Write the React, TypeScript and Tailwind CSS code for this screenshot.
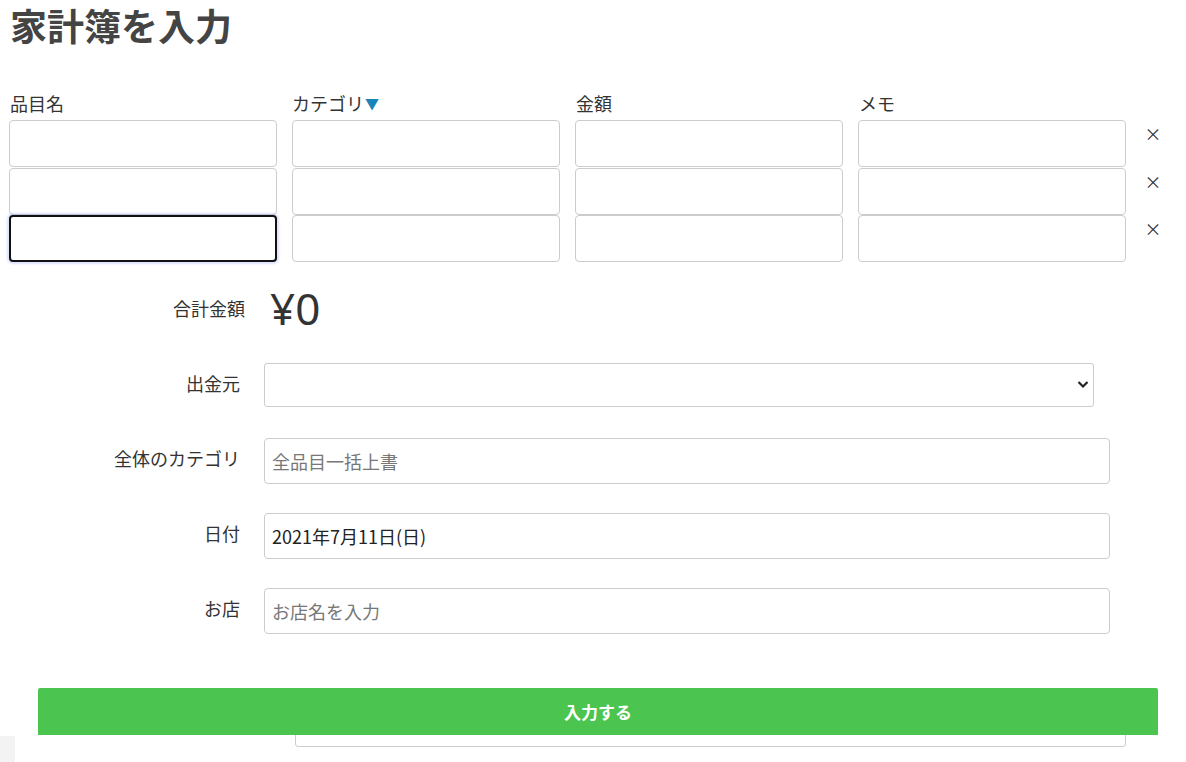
import React from "react";

const JP = "font-['Noto_Sans_CJK_JP','Noto_Sans',sans-serif]";

function Cell({ focused }: { focused?: boolean }) {
  return focused ? (
    <input
      className="h-full w-[268px] rounded-[4px] border-2 border-[#111] bg-white px-2 outline-none shadow-[0_0_2px_2px_rgba(120,140,255,0.25)]"
      readOnly
    />
  ) : (
    <input
      className="h-full w-[268px] rounded-[4px] border border-[#cccccc] bg-white px-2 outline-none"
      readOnly
    />
  );
}

function Row({ focusFirst }: { focusFirst?: boolean }) {
  return (
    <div className="flex h-[47.5px] pb-[0.5px]">
      <div className="grid grid-cols-[268px_268px_268px_268px] gap-x-[15px]">
        <Cell focused={focusFirst} />
        <Cell />
        <Cell />
        <Cell />
      </div>
      <div className="ml-[16px] w-[22px] pt-[1px] text-center text-[17px] leading-[26px] text-[#333]">×</div>
    </div>
  );
}

export default function App() {
  return (
    <div className={`relative h-[762px] w-[1186px] overflow-hidden bg-white text-[#333] ${JP}`}>
      <div className="px-[9px]">
        <h1 className="pl-[1px] text-[37px] font-bold leading-[50px] text-[#444]">家計簿を入力</h1>
        <div className="mt-[40px] grid h-[26px] grid-cols-[268px_268px_268px_268px] gap-x-[15px] text-[18px] leading-[26px]">
          <div className="pl-[1px]">品目名</div>
          <div className="flex items-center">
            カテゴリ<span className="ml-[1px] text-[14px] text-[#1a84b8]">▼</span>
          </div>
          <div className="pl-[1px]">金額</div>
          <div className="pl-[1px]">メモ</div>
        </div>
        <div className="mt-[4px] flex flex-col">
          <Row />
          <Row />
          <Row focusFirst />
        </div>
      </div>

      <div className="mt-[15px] flex h-[60px] items-center">
        <div className="w-[245px] text-right text-[18px] leading-[26px]">合計金額</div>
        <div className="ml-[25px] font-['Noto_Sans',sans-serif] text-[44px] leading-[60px] text-[#333]">¥0</div>
      </div>

      <div className="mt-[25px] flex">
        <div className="w-[240px] pt-[7px] text-right text-[18px] leading-[26px]">出金元</div>
        <div className="relative ml-[24px] h-[44px] w-[830px]">
          <select className="h-full w-full appearance-none rounded-[3px] border border-[#cccccc] bg-white px-2 outline-none"></select>
          <svg className="pointer-events-none absolute right-[5px] top-[17px]" width="12" height="9" viewBox="0 0 12 9">
            <path d="M1.5 2l4.5 4.5L10.5 2" fill="none" stroke="#222" strokeWidth="2.2" />
          </svg>
        </div>
      </div>

      <div className="mt-[31px] flex">
        <div className="w-[240px] pt-[7px] text-right text-[18px] leading-[26px]">全体のカテゴリ</div>
        <input
          className="ml-[24px] h-[46px] w-[846px] rounded-[4px] border border-[#cccccc] px-[7px] text-[18px] outline-none placeholder:text-[#777]"
          placeholder="全品目一括上書"
          readOnly
        />
      </div>

      <div className="mt-[29px] flex">
        <div className="w-[240px] pt-[7px] text-right text-[18px] leading-[26px]">日付</div>
        <input
          className="ml-[24px] h-[46px] w-[846px] rounded-[4px] border border-[#cccccc] px-[7px] text-[18px] text-[#222] outline-none"
          value="2021年7月11日(日)"
          readOnly
        />
      </div>

      <div className="mt-[29px] flex">
        <div className="w-[240px] pt-[7px] text-right text-[18px] leading-[26px]">お店</div>
        <input
          className="ml-[24px] h-[46px] w-[846px] rounded-[4px] border border-[#cccccc] px-[7px] text-[18px] outline-none placeholder:text-[#777]"
          placeholder="お店名を入力"
          readOnly
        />
      </div>

      <div className="ml-[295px] mt-[66px] h-[47px] w-[831px] rounded-b-[3px] border border-[#cccccc]"></div>

      <div className="absolute left-0 top-[736px] h-[26px] w-[15px] bg-[#f3f3f3]"></div>

      <button className="absolute left-[38px] top-[688px] flex h-[47px] w-[1120px] items-center justify-center rounded-t-[2px] bg-[#4bc54f] text-[17px] font-bold text-white">
        入力する
      </button>
    </div>
  );
}
